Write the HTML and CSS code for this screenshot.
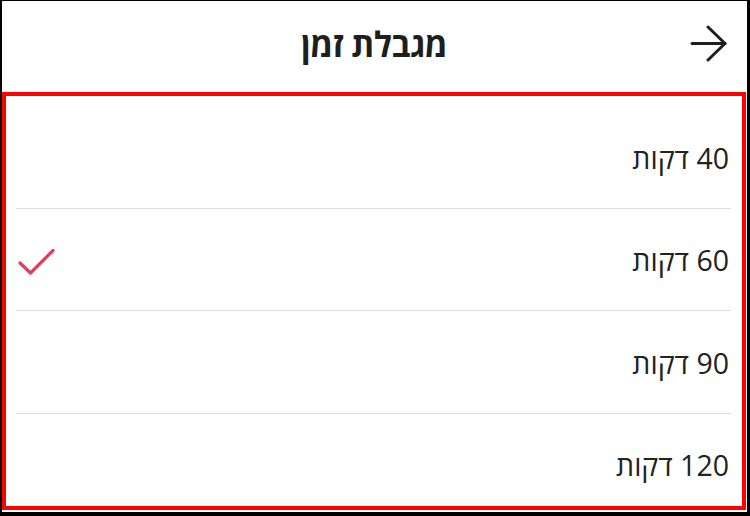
FILE: index.html
```html
<!DOCTYPE html>
<html lang="he" dir="rtl">
<head>
    <meta charset="UTF-8">
    <meta name="viewport" content="width=device-width, initial-scale=1.0">
    <title>מגבלת זמן</title>
    <link rel="stylesheet" href="styles.css">
</head>
<body>
    <div class="frame">
        <!-- Header -->
        <div class="header">
            <button class="back-btn" aria-label="חזרה">
                <svg width="38" height="38" viewBox="0 0 38 38" fill="none" stroke="#1e1e1e" stroke-width="3" stroke-linecap="round" stroke-linejoin="round">
                    <path d="M2 18.5H35"/>
                    <path d="M18 2L35 18.5L18 35"/>
                </svg>
            </button>
            <h1 class="title">מגבלת זמן</h1>
            <div class="spacer"></div>
        </div>

        <!-- Options -->
        <div class="options-box">
            <div class="option-list">
                <div class="option">
                    <span class="option-label">40 דקות</span>
                </div>
                <div class="option selected">
                    <span class="option-label">60 דקות</span>
                    <svg class="check" width="38" height="28" viewBox="0 0 38 28" fill="none" stroke="#ea3a61" stroke-width="3.2" stroke-linecap="round" stroke-linejoin="round">
                        <path d="M2 15L12.5 25L35 2.5"/>
                    </svg>
                </div>
                <div class="option">
                    <span class="option-label">90 דקות</span>
                </div>
                <div class="option">
                    <span class="option-label">120 דקות</span>
                </div>
            </div>
        </div>
    </div>
</body>
</html>
```

FILE: styles.css
```css
* {
    margin: 0;
    padding: 0;
    box-sizing: border-box;
}
body {
    font-family: "Open Sans", "DejaVu Sans", sans-serif;
    background-color: #fff;
    color: #1e1e1e;
}
.frame {
    width: 750px;
    height: 516px;
    border-style: solid;
    border-color: #000;
    border-width: 1px 3px 4px 2px;
    display: flex;
    flex-direction: column;
    overflow: hidden;
}
.header {
    height: 91px;
    flex-shrink: 0;
    display: grid;
    grid-template-columns: 1fr auto 1fr;
    align-items: center;
    padding: 0 19px 6px 18px;
}
.back-btn {
    justify-self: start;
    background: none;
    border: none;
    display: flex;
}
.title {
    font-size: 33px;
    font-weight: 700;
    letter-spacing: -0.5px;
    transform: scaleY(1.05);
}
.options-box {
    flex: 1;
    border: 4px solid #ff0000;
    margin: 0 1px 2px 0;
    overflow: hidden;
}
.option-list {
    padding-top: 10px;
}
.option {
    height: 102.5px;
    margin: 0 11px 0 10px;
    border-bottom: 1px solid #dedede;
    display: flex;
    justify-content: space-between;
    align-items: center;
    padding-top: 2px;
}
.option-label {
    font-size: 28.5px;
    font-weight: 400;
    color: #222;
    margin-right: 2px;
}
.check {
    margin-left: 2px;
    margin-top: 4px;
}
```
